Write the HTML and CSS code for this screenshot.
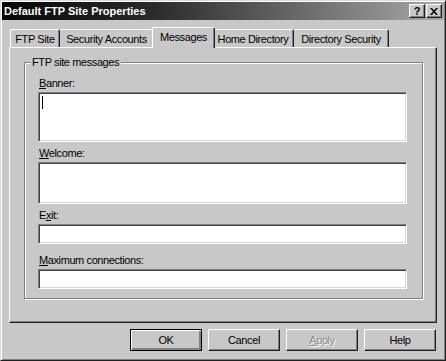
FILE: index.html
```html
<!DOCTYPE html>
<html lang="en">
<head>
  <meta charset="UTF-8">
  <title>Default FTP Site Properties</title>
  <link rel="stylesheet" href="styles.css">
</head>
<body>

  <div class="dialog">
    <!-- Caption -->
    <div class="titlebar">
      <span class="title">Default FTP Site Properties</span>
      <div class="caption-buttons">
        <span class="cap-btn help">?</span>
        <span class="cap-btn close">
          <svg width="8" height="7" viewBox="0 0 8 7">
            <path d="M0 0h2l2 2.5L6 0h2L5 3.5 8 7H6L4 4.5 2 7H0l3-3.5z" fill="#000"/>
          </svg>
        </span>
      </div>
    </div>

    <!-- Tabs -->
    <ul class="tabs">
      <li class="tab tab-site">FTP Site</li>
      <li class="tab tab-accounts">Security Accounts</li>
      <li class="tab tab-messages selected">Messages</li>
      <li class="tab tab-home">Home Directory</li>
      <li class="tab tab-security">Directory Security</li>
    </ul>

    <div class="panel">
      <div class="group">
        <span class="group-title">FTP site messages</span>

        <label class="field-label first"><u>B</u>anner:</label>
        <div class="edit banner"><span class="caret"></span></div>

        <label class="field-label"><u>W</u>elcome:</label>
        <div class="edit welcome"></div>

        <label class="field-label">E<u>x</u>it:</label>
        <div class="edit single"></div>

        <label class="field-label spaced"><u>M</u>aximum connections:</label>
        <div class="edit single"></div>
      </div>
    </div>

    <!-- Dialog buttons -->
    <div class="buttons">
      <button class="btn default">OK</button>
      <button class="btn">Cancel</button>
      <button class="btn disabled"><u>A</u>pply</button>
      <button class="btn">Help</button>
    </div>
  </div>

</body>
</html>
```

FILE: styles.css
```css
* {
  box-sizing: border-box;
}

body {
  margin: 0;
  background-color: #c8c8c8;
  font-family: "Liberation Sans", Arial, sans-serif;
  font-size: 11px;
  letter-spacing: -0.4px;
  color: #000;
}

.dialog {
  width: 446px;
  height: 361px;
  padding: 1px;
  background-color: #c8c8c8;
  border: 1px solid;
  border-color: #dcdcdc #202020 #202020 #dcdcdc;
  box-shadow: inset 1px 1px 0 #fff, inset -1px -1px 0 #808080;
}

/* Caption */
.titlebar {
  height: 18px;
  display: flex;
  align-items: center;
  justify-content: space-between;
  padding: 0 2px 0 2px;
  background: linear-gradient(to right, #060606 0%, #2c2c2c 35%, #a8a8a8 100%);
}

.title {
  color: #fff;
  font-weight: bold;
  font-size: 11px;
  letter-spacing: 0;
}

.caption-buttons {
  display: flex;
}

.cap-btn {
  width: 16px;
  height: 14px;
  display: flex;
  align-items: center;
  justify-content: center;
  background-color: #c8c8c8;
  border: 1px solid;
  border-color: #fff #202020 #202020 #fff;
  box-shadow: inset -1px -1px 0 #808080;
  font-weight: bold;
  font-size: 11px;
  letter-spacing: 0;
  line-height: 1;
}

.cap-btn.close {
  margin-left: 1px;
}

/* Tabs */
.tabs {
  list-style: none;
  margin: 7px 0 0 0;
  padding: 0 0 0 8px;
  height: 20px;
  display: flex;
  align-items: flex-end;
}

.tab {
  height: 18px;
  line-height: 19px;
  text-align: center;
  background-color: #c8c8c8;
  border-top: 1px solid #fff;
  border-left: 1px solid #fff;
  border-right: 1px solid #202020;
  border-radius: 2px 2px 0 0;
  box-shadow: inset -1px 0 0 #808080;
  white-space: nowrap;
}

.tab + .tab {
  border-left: none;
}

.tab-site { width: 50px; }
.tab-accounts { width: 94px; }
.tab-home { width: 81px; }
.tab-security { width: 95px; }

.tab.selected {
  position: relative;
  z-index: 1;
  width: 63px;
  height: 21px;
  margin: 0 -2px -1px -2px;
  border-left: 1px solid #fff;
}

.tab.selected + .tab {
  border-left: none;
}

/* Tab page */
.panel {
  margin: 0 7px;
  height: 276px;
  padding: 14px 13px 0 14px;
  border: 1px solid;
  border-color: #fff #202020 #202020 #fff;
  box-shadow: inset -1px -1px 0 #808080;
}

.group {
  position: relative;
  padding: 14px 15px 9px 13px;
  border: 1px solid #808080;
  box-shadow: 1px 1px 0 #fff, inset 1px 1px 0 #fff;
}

.group-title {
  position: absolute;
  top: -7px;
  left: 5px;
  padding: 0 2px;
  line-height: 13px;
  background-color: #c8c8c8;
}

.field-label {
  display: block;
  line-height: 13px;
  margin: 5px 0 2px 1px;
}

.field-label.first {
  margin-top: 0;
}

.field-label.spaced {
  margin-top: 10px;
}

.edit {
  background-color: #fff;
  border: 1px solid;
  border-color: #808080 #fff #fff #808080;
  box-shadow: inset 1px 1px 0 #404040, inset -1px -1px 0 #d8d8d8;
  padding: 3px 2px;
}

.edit.banner {
  height: 50px;
}

.edit.welcome {
  height: 42px;
}

.edit.single {
  height: 20px;
}

.caret {
  display: block;
  width: 1px;
  height: 13px;
  margin-left: 1px;
  background-color: #000;
}

/* Buttons */
.buttons {
  display: flex;
  justify-content: flex-end;
  gap: 6px;
  margin-top: 6px;
  padding-right: 8px;
}

.btn {
  width: 72px;
  height: 22px;
  padding: 0;
  font-family: inherit;
  font-size: 11px;
  letter-spacing: -0.4px;
  color: #000;
  background-color: #c8c8c8;
  border: 1px solid;
  border-color: #fff #202020 #202020 #fff;
  box-shadow: inset -1px -1px 0 #808080;
}

.btn.default {
  border: 1px solid #000;
  box-shadow: inset 1px 1px 0 #fff, inset -2px -2px 0 #808080;
}

.btn.disabled {
  color: #8a8a8a;
  text-shadow: 1px 1px 0 #fff;
}
```
